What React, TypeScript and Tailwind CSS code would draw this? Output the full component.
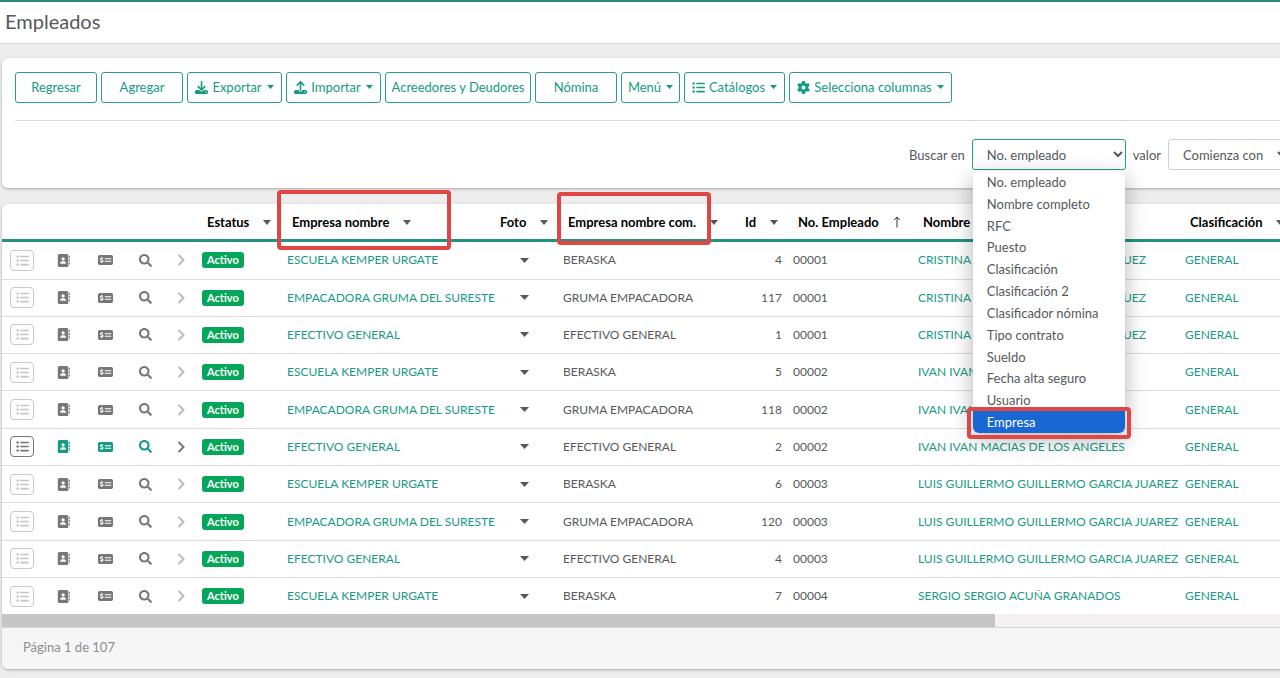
import { useState } from "react";
import {
  FaAddressBook,
  FaDownload,
  FaGear,
  FaListUl,
  FaMoneyCheckDollar,
  FaUpload,
} from "react-icons/fa6";
import { FaSearch } from "react-icons/fa";
import type { IconType } from "react-icons";

interface ToolbarItem {
  label: string;
  width: string;
  icon?: IconType;
  menu?: boolean;
}

const toolbar: ToolbarItem[] = [
  { label: "Regresar", width: "min-w-[82px]" },
  { label: "Agregar", width: "min-w-[82px]" },
  { label: "Exportar", width: "min-w-[95px]", icon: FaDownload, menu: true },
  { label: "Importar", width: "min-w-[95px]", icon: FaUpload, menu: true },
  { label: "Acreedores y Deudores", width: "min-w-[146px]" },
  { label: "Nómina", width: "min-w-[82px]" },
  { label: "Menú", width: "min-w-[59px]", menu: true },
  { label: "Catálogos", width: "min-w-[101px]", icon: FaListUl, menu: true },
  {
    label: "Selecciona columnas",
    width: "min-w-[163px]",
    icon: FaGear,
    menu: true,
  },
];

const searchFields = [
  "No. empleado",
  "Nombre completo",
  "RFC",
  "Puesto",
  "Clasificación",
  "Clasificación 2",
  "Clasificador nómina",
  "Tipo contrato",
  "Sueldo",
  "Fecha alta seguro",
  "Usuario",
  "Empresa",
];

interface Employee {
  company: string;
  tradeName: string;
  id: number;
  number: string;
  name: string;
}

const KEMPER = { company: "ESCUELA KEMPER URGATE", tradeName: "BERASKA" };
const GRUMA = {
  company: "EMPACADORA GRUMA DEL SURESTE",
  tradeName: "GRUMA EMPACADORA",
};
const EFECTIVO = { company: "EFECTIVO GENERAL", tradeName: "EFECTIVO GENERAL" };

const CRISTINA = "CRISTINA CRISTINA TORRES RODRIGUEZ";
const IVAN = "IVAN IVAN MACIAS DE LOS ANGELES";
const LUIS = "LUIS GUILLERMO GUILLERMO GARCIA JUAREZ";

const employees: Employee[] = [
  { ...KEMPER, id: 4, number: "00001", name: CRISTINA },
  { ...GRUMA, id: 117, number: "00001", name: CRISTINA },
  { ...EFECTIVO, id: 1, number: "00001", name: CRISTINA },
  { ...KEMPER, id: 5, number: "00002", name: IVAN },
  { ...GRUMA, id: 118, number: "00002", name: IVAN },
  { ...EFECTIVO, id: 2, number: "00002", name: IVAN },
  { ...KEMPER, id: 6, number: "00003", name: LUIS },
  { ...GRUMA, id: 120, number: "00003", name: LUIS },
  { ...EFECTIVO, id: 4, number: "00003", name: LUIS },
  { ...KEMPER, id: 7, number: "00004", name: "SERGIO SERGIO ACUÑA GRANADOS" },
];

function Caret({ className = "h-1 w-2" }: { className?: string }) {
  return (
    <svg
      viewBox="0 0 8 4"
      preserveAspectRatio="none"
      className={className}
      fill="currentColor"
    >
      <path d="M0 0h8L4 4z" />
    </svg>
  );
}

function SelectArrow({ position }: { position: string }) {
  return (
    <svg
      viewBox="0 0 10 7"
      className={`pointer-events-none absolute top-3 h-[7px] w-[10px] ${position}`}
      fill="none"
      stroke="currentColor"
      strokeWidth="2"
    >
      <path d="M1 1l4 4 4-4" />
    </svg>
  );
}

function HeaderCell({
  label,
  sorted,
  mark,
}: {
  label: string;
  sorted?: boolean;
  mark?: string;
}) {
  return (
    <th className="relative border-b-[3px] border-[#26917f] pt-[2px] pl-[10px] text-left text-[13px] font-bold text-black">
      <button className="flex items-center gap-[14px] whitespace-nowrap">
        {label}
        {sorted ? (
          <svg
            viewBox="0 0 8 12"
            className="h-3 w-2 text-[#333]"
            fill="none"
            stroke="currentColor"
          >
            <path d="M4 11.5V1.2M1.2 4 4 1l2.8 3" />
          </svg>
        ) : (
          <Caret className="h-[5px] w-2 text-[#55595c]" />
        )}
      </button>
      {mark && (
        <span
          className={`pointer-events-none absolute z-10 rounded border-4 border-[#e04646] ${mark}`}
        />
      )}
    </th>
  );
}

function EmployeeRow({
  employee,
  active,
}: {
  employee: Employee;
  active: boolean;
}) {
  const iconColor = active ? "text-[#159a84]" : "text-[#777]";

  return (
    <tr className="border-b border-[#dcdcdc] last:border-b-0">
      <td className="pl-2">
        <button
          aria-label="Opciones"
          className={`flex h-[21px] w-6 items-center justify-center rounded border ${
            active
              ? "border-[#777] text-[#777]"
              : "border-[#c8c8c8] text-[#c4c4c4]"
          }`}
        >
          <FaListUl className="size-[13px]" />
        </button>
      </td>
      <td>
        <button
          aria-label="Expediente"
          className={`mx-auto flex ${iconColor}`}
        >
          <FaAddressBook className="size-[13px]" />
        </button>
      </td>
      <td>
        <button aria-label="Nómina" className={`mx-auto flex ${iconColor}`}>
          <FaMoneyCheckDollar className="h-[14px] w-[15px]" />
        </button>
      </td>
      <td>
        <button aria-label="Consultar" className={`mx-auto flex ${iconColor}`}>
          <FaSearch className="size-[13px]" />
        </button>
      </td>
      <td>
        <button
          aria-label="Expandir"
          className={`mx-auto flex ${active ? "text-[#777]" : "text-[#bbb]"}`}
        >
          <svg
            viewBox="0 0 8 12"
            className="h-3 w-2"
            fill="none"
            stroke="currentColor"
            strokeWidth="2"
          >
            <path d="M1.5 1l5 5-5 5" />
          </svg>
        </button>
      </td>
      <td className="pl-[5px]">
        <span className="inline-block rounded-[3px] bg-[#06a65a] px-[5px] text-[11px] leading-4 font-bold text-white">
          Activo
        </span>
      </td>
      <td className="pl-[5px]">
        <a href="#empresa" className="text-[#189b85]">
          {employee.company}
        </a>
      </td>
      <td>
        <button aria-label="Ver foto" className="mx-auto flex">
          <Caret className="h-[5px] w-[9px]" />
        </button>
      </td>
      <td className="pl-[5px]">{employee.tradeName}</td>
      <td className="pr-[6px] text-right">{employee.id}</td>
      <td className="pl-[5px]">{employee.number}</td>
      <td className="pl-[5px]">
        <a href="#empleado" className="text-[#189b85]">
          {employee.name}
        </a>
      </td>
      <td className="pl-[5px]">
        <a href="#clasificacion" className="text-[#189b85]">
          GENERAL
        </a>
      </td>
    </tr>
  );
}

export default function App() {
  const [field, setField] = useState("No. empleado");

  return (
    <div className="min-h-screen overflow-hidden bg-[#ededed] font-[Lato,'Noto_Sans',sans-serif] text-[13px] leading-5 text-[#55595c]">
      <header className="flex h-11 items-center border-t-2 border-b border-t-[#2a8a79] border-b-[#d6d6d6] bg-white px-[5px] pb-1">
        <h1 className="text-xl">Empleados</h1>
      </header>

      <main className="mt-[14px] -mr-5 ml-[2px]">
        {/* Toolbar and search */}
        <section className="rounded-md bg-white px-[13px] pt-[14px] pb-[18px] shadow-[0_1px_3px_rgba(0,0,0,0.3)]">
          <div className="flex items-center gap-1">
            {toolbar.map(({ label, width, icon: Icon, menu }) => (
              <button
                key={label}
                className={`flex h-[31px] shrink-0 items-center justify-center gap-1 rounded-[3px] border border-[#26a08a] px-[5px] pb-px whitespace-nowrap text-[#159a84] ${width}`}
              >
                {Icon && <Icon className="size-[13px]" />}
                {label}
                {menu && <Caret className="ml-px h-1 w-[7px]" />}
              </button>
            ))}
          </div>
          <hr className="mt-[17px] mb-[18px] border-[#d8d8d8]" />
          <div className="flex items-center justify-end gap-[7px]">
            <label htmlFor="campo">Buscar en</label>
            <div className="relative">
              <select
                id="campo"
                value={field}
                onChange={(e) => setField(e.target.value)}
                className="block h-[31px] w-[154px] appearance-none rounded-[3px] border border-[#26a08a] bg-white pl-[14px]"
              >
                {searchFields.map((name) => (
                  <option key={name}>{name}</option>
                ))}
              </select>
              <SelectArrow position="right-[3px]" />
              <ul className="absolute top-8 left-px z-20 grid h-[262px] w-[152px] rounded-md bg-white shadow-[0_6px_22px_rgba(0,0,0,0.3)]">
                {searchFields.map((name) => (
                  <li
                    key={name}
                    className={`relative flex items-center pl-[14px] ${
                      name === "Empresa"
                        ? "rounded-b-md bg-[#1967d2] text-white"
                        : ""
                    }`}
                  >
                    {name}
                    {name === "Empresa" && (
                      <span className="pointer-events-none absolute -inset-x-[6px] -top-1 -bottom-[6px] rounded border-4 border-[#e04646]" />
                    )}
                  </li>
                ))}
              </ul>
            </div>
            <label htmlFor="criterio">valor</label>
            <div className="relative">
              <select
                id="criterio"
                className="block h-[31px] w-[119px] appearance-none rounded-[3px] border border-[#cfcfcf] bg-white pl-[14px]"
              >
                <option>Comienza con</option>
              </select>
              <SelectArrow position="right-0" />
            </div>
          </div>
        </section>

        {/* Employee grid */}
        <section className="mt-4 rounded-md bg-white shadow-[0_1px_3px_rgba(0,0,0,0.3)]">
          <table className="h-[410px] w-full table-fixed border-collapse text-xs whitespace-nowrap">
            <colgroup>
              <col className="w-10" />
              <col className="w-[43px]" />
              <col className="w-[40px]" />
              <col className="w-[40px]" />
              <col className="w-[32px]" />
              <col className="w-[85px]" />
              <col className="w-[208px]" />
              <col className="w-[68px]" />
              <col className="w-[177px]" />
              <col className="w-[53px]" />
              <col className="w-[125px]" />
              <col className="w-[267px]" />
              <col />
            </colgroup>
            <thead>
              <tr className="h-[36px]">
                <td
                  colSpan={5}
                  className="border-b-[3px] border-[#26917f]"
                />
                <HeaderCell label="Estatus" />
                <HeaderCell
                  label="Empresa nombre"
                  mark="-top-[14px] -left-[5px] h-[60px] w-[174px]"
                />
                <HeaderCell label="Foto" />
                <HeaderCell
                  label="Empresa nombre com."
                  mark="-top-3 -left-[1px] h-[53px] w-[154px]"
                />
                <HeaderCell label="Id" />
                <HeaderCell label="No. Empleado" sorted />
                <HeaderCell label="Nombre" />
                <HeaderCell label="Clasificación" />
              </tr>
            </thead>
            <tbody>
              {employees.map((employee, i) => (
                <EmployeeRow key={i} employee={employee} active={i === 5} />
              ))}
            </tbody>
          </table>
          <div className="h-[14px] border-b border-[#d8d6d7] bg-[#f3f1f2]">
            <div className="h-full w-[76.5%] bg-[#c6c6c6]" />
          </div>
          <footer className="flex h-[41px] items-center rounded-b-md bg-[#f6f6f6] pb-[3px] pl-[21px] text-[#8d8d8d]">
            Página 1 de 107
          </footer>
        </section>
      </main>
    </div>
  );
}
